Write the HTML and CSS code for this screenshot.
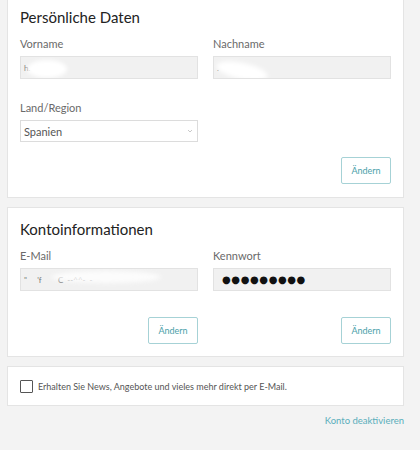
FILE: index.html
```html
<!DOCTYPE html>
<html lang="de">
<head>
    <meta charset="UTF-8">
    <meta name="viewport" content="width=device-width, initial-scale=1.0">
    <title>Mein Konto</title>
    <link rel="stylesheet" href="styles.css">
</head>
<body>
    <div class="page">
        <section class="card card-first">
            <h2>Persönliche Daten</h2>
            <div class="row">
                <div class="col">
                    <label>Vorname</label>
                    <div class="field"><span class="val">h.&nbsp;&nbsp;&nbsp;‘‘</span><span class="smudge s1"></span></div>
                </div>
                <div class="col">
                    <label>Nachname</label>
                    <div class="field"><span class="val">.</span><span class="smudge s2"></span></div>
                </div>
            </div>
            <div class="row">
                <div class="col">
                    <label class="land">Land/Region</label>
                    <div class="select">
                        <span>Spanien</span>
                        <svg width="6" height="4" viewBox="0 0 6 4"><path d="M1 1l2 2 2-2" fill="none" stroke="#bbb" stroke-width="0.8"/></svg>
                    </div>
                </div>
                <div class="col"></div>
            </div>
            <div class="actions">
                <button>Ändern</button>
            </div>
        </section>

        <section class="card">
            <h2>Kontoinformationen</h2>
            <div class="row">
                <div class="col">
                    <label>E-Mail</label>
                    <div class="field"><span class="val">"&nbsp;&nbsp;&nbsp;&nbsp;&nbsp;'f&nbsp;&nbsp;&nbsp;&nbsp;&nbsp;&nbsp;&nbsp;&nbsp;C&nbsp;&nbsp;--^^-&nbsp;&nbsp;-</span><span class="smudge s3"></span></div>
                    <div class="actions">
                        <button>Ändern</button>
                    </div>
                </div>
                <div class="col">
                    <label>Kennwort</label>
                    <div class="field"><span class="dots">●●●●●●●●●</span></div>
                    <div class="actions">
                        <button>Ändern</button>
                    </div>
                </div>
            </div>
        </section>

        <section class="card news">
            <span class="checkbox"></span>
            <span>Erhalten Sie News, Angebote und vieles mehr direkt per E-Mail.</span>
        </section>

        <div class="footer">
            <a href="#">Konto deaktivieren</a>
        </div>
    </div>
</body>
</html>
```

FILE: styles.css
```css
body {
    margin: 0;
    background-color: #f3f3f3;
    font-family: Lato, "Open Sans", sans-serif;
    overflow: hidden;
}
.page {
    padding: 0 16px 0 7px;
}
.card {
    background: #fff;
    border: 1px solid #e4e4e4;
    padding: 11px 12px 12px;
    margin-bottom: 9px;
}
.card-first {
    margin-top: -5px;
    padding-bottom: 13px;
}
h2 {
    margin: 0;
    font-size: 15px;
    line-height: 20px;
    font-weight: normal;
    color: #222;
}
.row {
    display: flex;
    gap: 15px;
}
.col {
    flex: 1;
}
label {
    display: block;
    margin: 10px 0 5px;
    font-size: 11px;
    line-height: 14px;
    color: #6a6a6a;
}
label.land {
    margin-top: 22px;
}
.field {
    position: relative;
    height: 23px;
    box-sizing: border-box;
    background: #f1f1f1;
    border: 1px solid #e2e2e2;
    display: flex;
    align-items: center;
    padding-left: 3px;
    overflow: hidden;
}
.val {
    font-size: 8px;
    color: #777;
    white-space: pre;
}
.smudge {
    position: absolute;
    background: #fff;
    border-radius: 50%;
    filter: blur(2px);
}
.s1 {
    left: 6px;
    top: 3px;
    width: 40px;
    height: 18px;
}
.s2 {
    left: 2px;
    top: 6px;
    width: 52px;
    height: 16px;
    transform: rotate(12deg);
}
.s3 {
    left: 30px;
    top: 2px;
    width: 110px;
    height: 12px;
    opacity: 0.8;
}
.dots {
    font-family: "DejaVu Sans", sans-serif;
    font-size: 10px;
    letter-spacing: 0.6px;
    color: #111;
    padding-left: 5px;
}
.select {
    height: 22px;
    box-sizing: border-box;
    border: 1px solid #dcdcdc;
    background: #fff;
    display: flex;
    align-items: center;
    justify-content: space-between;
    padding: 0 4px 0 3px;
    font-size: 11px;
    color: #555;
}
.actions {
    display: flex;
    justify-content: flex-end;
    margin-top: 15px;
}
.col .actions {
    margin-top: 26px;
}
button {
    width: 50px;
    height: 27px;
    background: #fff;
    border: 1px solid #a6d2d6;
    border-radius: 2px;
    color: #4b9fa9;
    font-family: Lato, sans-serif;
    font-size: 9px;
    padding: 0;
    cursor: pointer;
}
.news {
    display: flex;
    align-items: center;
    gap: 5px;
    height: 14px;
    padding: 12px 12px;
    font-size: 9px;
    color: #555;
}
.checkbox {
    width: 11px;
    height: 11px;
    border: 1px solid #555;
    border-radius: 1px;
}
.footer {
    display: flex;
    justify-content: flex-end;
    margin-top: 6px;
    line-height: 12px;
}
.footer a {
    font-size: 9.5px;
    color: #5aaebb;
    text-decoration: none;
}
```
